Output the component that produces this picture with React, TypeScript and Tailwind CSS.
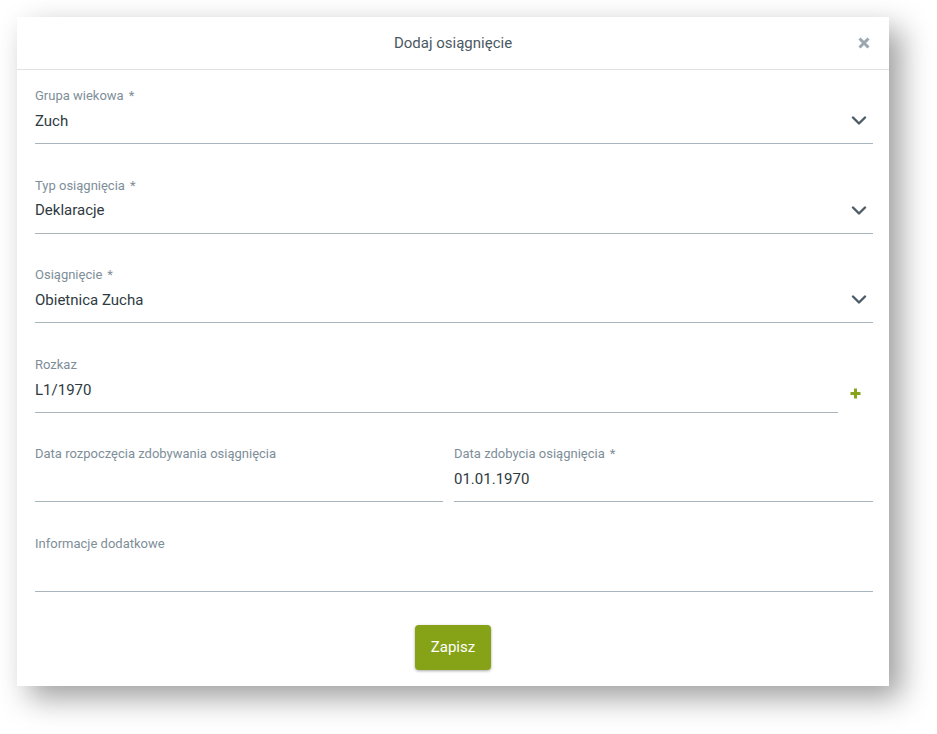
import React from "react";

function Chevron() {
  return (
    <svg width="16" height="10" viewBox="0 0 16 10" className="shrink-0">
      <polyline points="2,1.5 8,7.5 14,1.5" fill="none" stroke="#4c5b66" strokeWidth="2.4" strokeLinecap="round" strokeLinejoin="round" />
    </svg>
  );
}

function Field({
  label,
  value,
  required,
  select,
}: {
  label: string;
  value?: string;
  required?: boolean;
  select?: boolean;
}) {
  return (
    <div className="border-b border-[#a9b5bd] pb-[11px]">
      <div className="h-4 text-[13px] leading-4 text-[#7e8e99]">
        {label}
        {required && <span className="ml-[5px]">*</span>}
      </div>
      <div className="mt-[6px] flex h-[22px] items-center justify-between pr-[6px]">
        <span className="text-[15px] text-[#2e3a42]">{value}</span>
        {select && <Chevron />}
      </div>
    </div>
  );
}

export default function App() {
  return (
    <div
      className="min-h-screen bg-white pl-[17px] pt-[17px]"
      style={{ fontFamily: "Roboto, 'Liberation Sans', sans-serif" }}
    >
      <div className="w-[872px] bg-white shadow-[12px_12px_28px_rgba(0,0,0,0.38)]">
        {/* Header */}
        <div className="relative flex h-[53px] items-center justify-center border-b border-[#dfe3e6]">
          <h2 className="text-[15px] text-[#4b5963]">Dodaj osiągnięcie</h2>
          <button className="absolute right-[19px] top-[20px]">
            <svg width="12" height="12" viewBox="0 0 12 12">
              <path d="M1.5 1.5 L10.5 10.5 M10.5 1.5 L1.5 10.5" stroke="#9aa7b0" strokeWidth="3" />
            </svg>
          </button>
        </div>

        {/* Body */}
        <div className="flex flex-col gap-[33.6px] pl-[18px] pr-[16px] pt-[18px]">
          <Field label="Grupa wiekowa" value="Zuch" required select />
          <Field label="Typ osiągnięcia" value="Deklaracje" required select />
          <Field label="Osiągnięcie" value="Obietnica Zucha" required select />
          <div className="flex items-end">
            <div className="flex-1">
              <Field label="Rozkaz" value="L1/1970" />
            </div>
            <div className="mb-[14px] flex w-[35px] justify-center">
              <svg width="11" height="11" viewBox="0 0 11 11">
                <path d="M5.5 0.5 V10.5 M0.5 5.5 H10.5" stroke="#86a31c" strokeWidth="3" />
              </svg>
            </div>
          </div>
          <div className="grid grid-cols-[408px_1fr] gap-[11px]">
            <Field label="Data rozpoczęcia zdobywania osiągnięcia" value="" />
            <Field label="Data zdobycia osiągnięcia" value="01.01.1970" required />
          </div>
          <Field label="Informacje dodatkowe" value="" />
        </div>

        {/* Footer */}
        <div className="flex justify-center pb-[16px] pt-[33px]">
          <button className="h-[45px] w-[76px] rounded-[4px] bg-[#86a317] text-[15px] text-white shadow-[0_1px_3px_rgba(0,0,0,0.35)]">
            Zapisz
          </button>
        </div>
      </div>
    </div>
  );
}
